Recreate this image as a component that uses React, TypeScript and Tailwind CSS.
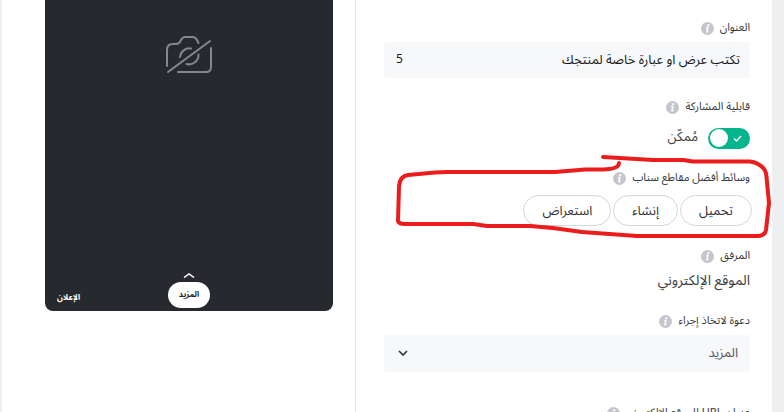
import { useState, type ReactNode } from "react";

const InfoIcon = () => (
  <svg viewBox="0 0 13 13" className="size-[13px] shrink-0" aria-hidden="true">
    <circle cx="6.5" cy="6.5" r="6.5" fill="#c5c5cd" />
    <circle cx="7.3" cy="3.2" r="1.1" fill="#fff" />
    <path d="M5.2 5.4h1.6l-.8 4.4h1.4" fill="none" stroke="#fff" strokeWidth="1.5" />
  </svg>
);

const CameraOffIcon = () => (
  <svg
    viewBox="0 0 48 40"
    className="h-10 w-12"
    fill="none"
    stroke="#85878a"
    strokeWidth="2"
    strokeLinecap="round"
    aria-hidden="true"
  >
    <path d="M2 31V15Q2 9 8 9h3q3 0 4.500-3l.5-1q1.500-3 4.500-3h7q3 0 4.500 3l1.500 3" />
    <path d="M46 13v19q0 5-5 5H13" />
    <path d="M3 37 45 6" />
    <path d="M15 22a9.500 9.500 0 0 1 11-8.500M33.500 19.500a9.500 9.500 0 0 1-12 9.500" />
  </svg>
);

// Hand-drawn marker line around the media buttons
const Marker = () => (
  <svg
    viewBox="0 0 376 86"
    className="pointer-events-none absolute -top-3.5 -right-[21px] h-[86px] w-[376px]"
    fill="none"
    stroke="#ea1c1c"
    strokeWidth="4"
    strokeLinecap="round"
    strokeLinejoin="round"
    aria-hidden="true"
  >
    <path d="M208 3 258 6H288L298 7.500H355Q361 8 366 12Q371 15 371.500 23L374 49L371 76Q370 82 362 82H242L187 78L158 74L135 72H92L78 70H10Q4 70 3 67L4 32Q5 22 13 21L40 18.500L52 18H160L190 15.500H208Q224 15 224 9" />
  </svg>
);

const Label = ({ text, htmlFor }: { text: string; htmlFor?: string }) => (
  <div className="flex h-5 items-center gap-1.5">
    <label htmlFor={htmlFor} className="text-[11px] leading-5 text-[#36383c]">
      {text}
    </label>
    <InfoIcon />
  </div>
);

const PillButton = ({ children }: { children: ReactNode }) => (
  <button
    type="button"
    className="h-[31px] rounded-full border border-[#d5d6d8] px-[18px] text-[13px] leading-5 text-[#2f3136]"
  >
    {children}
  </button>
);

const Preview = () => (
  <section className="pr-[22px] pl-[43px]">
    <div className="flex h-[311px] flex-col items-center rounded-b-lg bg-[#262a2e] pt-[35px]">
      <CameraOffIcon />
      <div className="mt-auto grid w-full grid-cols-3 items-end px-3 pb-[3px]">
        <span />
        <div className="flex flex-col items-center gap-1">
          <svg viewBox="0 0 12 5" className="h-[5px] w-3" fill="none" stroke="#fff" strokeWidth="1.5" aria-hidden="true">
            <path d="M1 4.500 6 1l5 3.500" />
          </svg>
          <button
            type="button"
            className="h-[26px] rounded-full bg-white px-[11px] text-[8px] font-bold text-[#222]"
          >
            المزيد
          </button>
        </div>
        <span className="pb-1 text-left text-[8px] leading-3 font-bold text-white">الإعلان</span>
      </div>
    </div>
  </section>
);

export default function App() {
  const [title, setTitle] = useState("تكتب عرض او عبارة خاصة لمنتجك");
  const [shareable, setShareable] = useState(true);

  return (
    <div
      dir="rtl"
      className="h-screen overflow-hidden bg-[#eeeff1] pr-3 pl-0.5 font-['Noto_Sans_Arabic','Noto_Sans','DejaVu_Sans',sans-serif]"
    >
      <main className="grid min-h-full grid-cols-[minmax(0,417fr)_minmax(0,353fr)] bg-white">
        <form className="border-l border-[#e6e6e8] pt-[18px] pr-[22px] pl-7">
          <Label text="العنوان" htmlFor="title" />
          <div className="mt-1 flex h-9 items-center rounded bg-[#f7f8fa] pr-2.5 pl-3">
            <input
              id="title"
              value={title}
              onChange={(e) => setTitle(e.target.value)}
              className="h-full w-0 min-w-0 flex-1 text-[13px] text-[#17181c] outline-none"
            />
            <span className="text-xs text-[#17181c]">5</span>
          </div>

          <div className="mt-[19px]">
            <Label text="قابلية المشاركة" />
            <label className="mt-2.5 flex h-[22px] items-center gap-2.5">
              <input
                type="checkbox"
                checked={shareable}
                onChange={(e) => setShareable(e.target.checked)}
                className="peer sr-only"
              />
              <span className="flex h-[21px] w-[42px] items-center justify-between rounded-full bg-[#9a9ca0] pr-2 pl-0.5 peer-checked:bg-[#04b58c]">
                <svg viewBox="0 0 9 7" className="h-[7px] w-[9px]" fill="none" stroke="#fff" strokeWidth="1.3" aria-hidden="true">
                  <path d="m1 3.500 2.500 2.500L8 1" />
                </svg>
                <span className="size-[18px] rounded-full bg-white" />
              </span>
              <span className="text-[13px] text-[#3a3c40]">مُمكّن</span>
            </label>
          </div>

          <div className="relative mt-[19px]">
            <Label text="وسائط أفضل مقاطع سناب" />
            <div className="-mr-0.5 mt-[7px] flex gap-0.5">
              <PillButton>تحميل</PillButton>
              <PillButton>إنشاء</PillButton>
              <PillButton>استعراض</PillButton>
            </div>
            <Marker />
          </div>

          <div className="mt-5">
            <Label text="المرفق" />
            <p className="mt-1 text-sm leading-[22px] text-[#3a3c40]">الموقع الإلكتروني</p>
          </div>

          <div className="mt-[19px]">
            <Label text="دعوة لاتخاذ إجراء" htmlFor="cta" />
            <div className="relative mt-1">
              <select
                id="cta"
                className="h-[37px] w-full appearance-none rounded bg-[#f7f8fa] pr-3 pl-8 text-[13px] text-[#55575c] outline-none"
              >
                <option>المزيد</option>
              </select>
              <svg
                viewBox="0 0 10 6"
                className="pointer-events-none absolute top-[15px] left-3.5 h-1.5 w-2.5"
                fill="none"
                stroke="#2b2d31"
                strokeWidth="1.6"
                aria-hidden="true"
              >
                <path d="m1 1 4 4 4-4" />
              </svg>
            </div>
          </div>

          <div className="mt-[31px]">
            <Label text="عنوان URL للموقع الإلكتروني" />
          </div>
        </form>
        <Preview />
      </main>
    </div>
  );
}
